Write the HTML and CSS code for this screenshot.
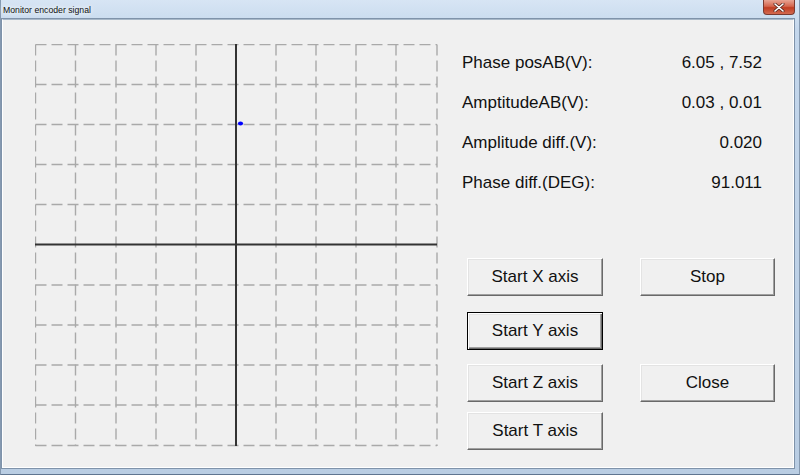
FILE: index.html
```html
<!DOCTYPE html>
<html>
<head>
<meta charset="utf-8">
<title>Monitor encoder signal</title>
<link rel="stylesheet" href="styles.css">
</head>
<body>
<div class="window">
  <div class="titlebar">
    <span class="title">Monitor encoder signal</span>
    <span class="close-btn"><svg width="12" height="9" viewBox="0 0 12 9"><path d="M2 1 L10 8 M10 1 L2 8" stroke="#5a2a22" stroke-width="3" stroke-linecap="round"/><path d="M2 1 L10 8 M10 1 L2 8" stroke="#ffffff" stroke-width="1.6" stroke-linecap="round"/></svg></span>
  </div>
  <div class="client">
    <svg class="scope" width="404" height="404" viewBox="0 0 404 404">
      <g class="grid" stroke="#a9a9a9" stroke-width="1.4" stroke-dasharray="11 5" fill="none">
        <path d="M0.5 0.5 V402"/>
        <path d="M40.5 0.5 V402"/>
        <path d="M81 0.5 V402"/>
        <path d="M121 0.5 V402"/>
        <path d="M161 0.5 V402"/>
        <path d="M241 0.5 V402"/>
        <path d="M281 0.5 V402"/>
        <path d="M321 0.5 V402"/>
        <path d="M361 0.5 V402"/>
        <path d="M402 0.5 V402"/>
        <path d="M0.5 0.5 H402"/>
        <path d="M0.5 40.5 H402"/>
        <path d="M0.5 80.5 H402"/>
        <path d="M0.5 120.5 H402"/>
        <path d="M0.5 160.5 H402"/>
        <path d="M0.5 241 H402"/>
        <path d="M0.5 281 H402"/>
        <path d="M0.5 321 H402"/>
        <path d="M0.5 361 H402"/>
        <path d="M0.5 401.5 H402"/>
      </g>
      <rect x="200" y="0" width="2" height="402" fill="#333"/>
      <rect x="0" y="199.5" width="402" height="2" fill="#333"/>
      <ellipse cx="205.5" cy="79.5" rx="2.6" ry="2" fill="#0000ff"/>
    </svg>
    <div class="panel">
      <div class="info">
        <div class="row"><span class="label">Phase posAB(V):</span><span class="value">6.05 , 7.52</span></div>
        <div class="row"><span class="label">AmptitudeAB(V):</span><span class="value">0.03 , 0.01</span></div>
        <div class="row"><span class="label">Amplitude diff.(V):</span><span class="value">0.020</span></div>
        <div class="row"><span class="label">Phase diff.(DEG):</span><span class="value">91.011</span></div>
      </div>
      <div class="buttons">
        <button class="btn b-x">Start X axis</button>
        <button class="btn b-stop">Stop</button>
        <button class="btn b-y focused">Start Y axis</button>
        <button class="btn b-z">Start Z axis</button>
        <button class="btn b-close">Close</button>
        <button class="btn b-t">Start T axis</button>
      </div>
    </div>
  </div>
</div>
</body>
</html>
```
FILE: styles.css
```css
html, body {
  margin: 0;
  padding: 0;
}
body {
  width: 800px;
  height: 475px;
  overflow: hidden;
  font-family: "Liberation Sans", Arial, sans-serif;
}
.window {
  width: 800px;
  height: 475px;
  box-sizing: border-box;
  background: linear-gradient(#d7e5f4, #c4d7ec 30px, #b9cde3);
  display: flex;
  flex-direction: column;
  border-bottom: 1px solid #5f7590;
  border-left: 1px solid #8599b0;
  border-right: 1px solid #8599b0;
}
.titlebar {
  height: 19px;
  flex: 0 0 19px;
  display: flex;
  align-items: flex-start;
  justify-content: space-between;
  position: relative;
}
.title {
  font-family: "Liberation Sans", Arial, sans-serif;
  font-size: 8.7px;
  color: #111;
  margin: 5px 0 0 2px;
  text-shadow: 0 0 4px #f4f8fc, 0 0 6px #f4f8fc;
}
.close-btn {
  width: 32px;
  height: 15px;
  margin-right: 4px;
  box-sizing: border-box;
  border: 1px solid #7a3a30;
  border-top: none;
  border-radius: 0 0 4px 4px;
  background: linear-gradient(#e8a493, #d4664e 45%, #c03d22 55%, #d36a50);
  display: flex;
  align-items: center;
  justify-content: center;
}
.client {
  flex: 1;
  margin: 0 5px 6px 1px;
  background: #f0f0f0;
  border: 1px solid #ffffff;
  border-top: 1px solid #a8b8c8;
  box-shadow: 0 0 0 1px #7f93aa;
  display: flex;
  align-items: flex-start;
  padding: 22px 0 0 32px;
}
.scope {
  display: block;
  margin-top: 2px;
}
.panel {
  margin-left: 23px;
  width: 315px;
}
.info {
  width: 300px;
  margin-top: 1px;
}
.row {
  height: 40px;
  display: flex;
  align-items: center;
  justify-content: space-between;
  font-size: 17px;
  color: #111;
}
.buttons {
  margin-top: 55px;
  margin-left: 5px;
  display: grid;
  grid-template-columns: 136px 135px;
  grid-template-rows: 38px 16px 38px 14px 38px 10px 38px;
  column-gap: 37px;
}
.btn {
  font-family: "Liberation Sans", Arial, sans-serif;
  font-size: 17px;
  color: #111;
  background: #f0f0f0;
  border: 1px solid;
  border-color: #ffffff #696969 #696969 #ffffff;
  box-shadow: inset -1px -1px 0 #a0a0a0, inset 1px 1px 0 #e3e3e3;
  padding: 0;
  margin: 0;
  width: 100%;
  height: 100%;
  box-sizing: border-box;
}
.btn.focused {
  border: 1px solid #000;
  box-shadow: inset 1px 1px 0 #ffffff, inset -1px -1px 0 #696969, inset -2px -2px 0 #a0a0a0, inset 2px 2px 0 #e3e3e3;
}
.b-x { grid-column: 1; grid-row: 1; }
.b-stop { grid-column: 2; grid-row: 1; }
.b-y { grid-column: 1; grid-row: 3; }
.b-z { grid-column: 1; grid-row: 5; }
.b-close { grid-column: 2; grid-row: 5; }
.b-t { grid-column: 1; grid-row: 7; }
```
